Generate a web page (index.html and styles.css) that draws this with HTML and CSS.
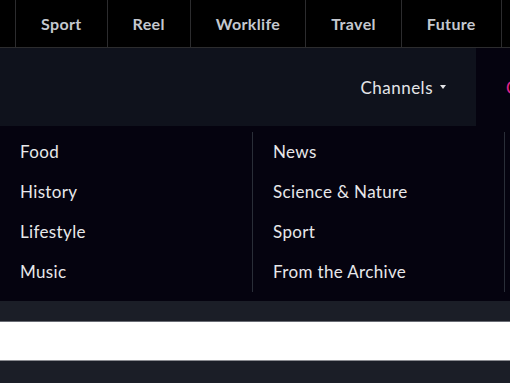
FILE: index.html
```html
<!DOCTYPE html>
<html lang="en">
<head>
<meta charset="utf-8">
<title>Channels</title>
<link rel="stylesheet" href="styles.css">
</head>
<body>
<header class="header">
  <nav class="topbar">
    <ul class="topnav">
      <li class="topnav-item">Sport</li>
      <li class="topnav-item">Reel</li>
      <li class="topnav-item">Worklife</li>
      <li class="topnav-item">Travel</li>
      <li class="topnav-item">Future</li>
    </ul>
  </nav>
  <div class="subbar">
    <div class="subbar-main">
      <button class="channels-btn">Channels <span class="caret"></span></button>
    </div>
    <div class="subbar-cta">Categories</div>
  </div>
  <div class="dropdown">
    <ul class="dd-col">
      <li class="dd-item">Food</li>
      <li class="dd-item">History</li>
      <li class="dd-item">Lifestyle</li>
      <li class="dd-item">Music</li>
    </ul>
    <ul class="dd-col dd-col-bordered">
      <li class="dd-item">News</li>
      <li class="dd-item">Science &amp; Nature</li>
      <li class="dd-item">Sport</li>
      <li class="dd-item">From the Archive</li>
    </ul>
    <ul class="dd-col dd-col-bordered"></ul>
  </div>
</header>
<div class="strip"></div>
<div class="searchbar"></div>
<div class="footer-area"></div>
</body>
</html>
```

FILE: styles.css
```css
* { box-sizing: border-box; }
html, body { margin: 0; padding: 0; }
body {
  background: #1b1e27;
  font-family: Lato, "Open Sans", "Liberation Sans", sans-serif;
  width: 510px;
  height: 383px;
  overflow: hidden;
}
ul { list-style: none; margin: 0; padding: 0; }

.topbar {
  height: 48px;
  background: #000;
  border-bottom: 1px solid #2c2c2e;
  padding-left: 15px;
}
.topnav { display: flex; height: 47px; }
.topnav-item {
  border-left: 1px solid #2c2c2e;
  padding: 0 25px;
  line-height: 47px;
  font-size: 16px;
  font-weight: 700;
  letter-spacing: 0.35px;
  color: #c4c8cf;
  white-space: nowrap;
}
.topnav-item:last-child { border-right: 1px solid #2c2c2e; }

.subbar {
  display: flex;
  height: 78px;
}
.subbar-main {
  flex: 1;
  background: #0f121c;
  display: flex;
  justify-content: flex-end;
  align-items: center;
}
.channels-btn {
  background: none;
  border: 0;
  font: inherit;
  font-size: 17px;
  letter-spacing: 0.5px;
  color: #e4e5e8;
  padding: 0 30px 0 0;
  display: flex;
  align-items: center;
  gap: 7px;
}
.caret {
  width: 0;
  height: 0;
  border-left: 3px solid transparent;
  border-right: 3px solid transparent;
  border-top: 4px solid #e4e5e8;
}
.subbar-cta {
  flex-shrink: 0;
  width: 34px;
  overflow: hidden;
  background: #05030f;
  color: #e0228c;
  font-size: 17px;
  padding-left: 30px;
  display: flex;
  align-items: center;
  white-space: nowrap;
}

.dropdown {
  background: #05030f;
  display: flex;
  padding: 6px 0 9px;
  height: 175px;
}
.dd-col {
  width: 252px;
  flex-shrink: 0;
  padding-left: 20px;
}
.dd-col-bordered { border-left: 1px solid #2a2e38; }
.dd-item {
  height: 40px;
  padding-bottom: 1px;
  display: flex;
  align-items: center;
  font-size: 17px;
  letter-spacing: 0.35px;
  color: #e8e8ea;
  white-space: nowrap;
}

.strip { height: 20px; background: #1b1e27; }
.searchbar {
  height: 40px;
  background: #fff;
  border-top: 1px solid #686b73;
  border-bottom: 1px solid #8a8b90;
}
.footer-area { height: 40px; background: #1b1e27; }
```
